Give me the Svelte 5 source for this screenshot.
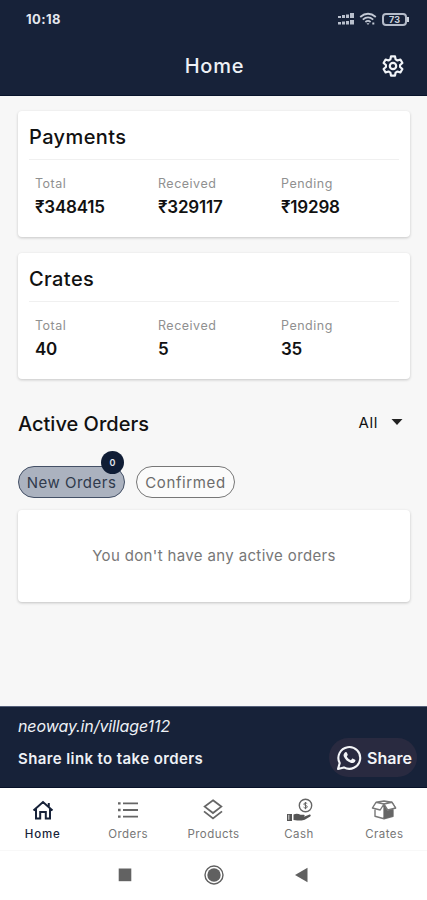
<script>
    let activeTab = 'Home'
    let filter = 'New Orders'

    const cards = [
        {
            title: 'Payments',
            items: [
                { label: 'Total', value: '₹348415' },
                { label: 'Received', value: '₹329117' },
                { label: 'Pending', value: '₹19298' }
            ]
        },
        {
            title: 'Crates',
            items: [
                { label: 'Total', value: '40' },
                { label: 'Received', value: '5' },
                { label: 'Pending', value: '35' }
            ]
        }
    ]

    const tabs = ['Home', 'Orders', 'Products', 'Cash', 'Crates']
</script>

<div class="phone">
    <div class="status">
        <div class="time">10:18</div>
        <div class="status-icons">
            <svg width="18" height="14" viewBox="0 0 18 14" fill="#b9c0cd">
                <path d="M1 4h3v2H1zM5 3h3v3H5zM9 2.400h3V6H9zM13 1h4v5h-4zM1 10h3v2.500H1zM5 9.500h3v3H5zM9 9h3v3.500H9zM13 8h4v4.500h-4z" />
            </svg>
            <svg class="wifi" width="18" height="14" viewBox="0 0 18 14" fill="none" stroke="#c3c9d5" stroke-width="1.800">
                <path d="M1.200 5Q9 -1.500 16.800 5M3.800 7.600Q9 3.200 14.200 7.600M6.400 10Q9 7.800 11.600 10" />
                <path d="M7.500 11.200h3L9 13zM13.300 10.500h2v2h-2z" fill="#c3c9d5" stroke="none" />
            </svg>
            <div class="battery">73</div>
        </div>
    </div>

    <div class="header">
        <div class="header-title">Home</div>
        <svg class="gear" width="24" height="24" viewBox="0 0 24 24" fill="none" stroke="#f1f4f8" stroke-width="2.200" stroke-linejoin="round">
            <path d="M10 2.400h4l.6 3 1.900 1.100 2.900-1 2 3.500-2.300 2v2l2.300 2-2 3.500-2.900-1-1.900 1.100-.6 3h-4l-.6-3-1.900-1.100-2.900 1-2-3.500 2.300-2v-2l-2.300-2 2-3.500 2.900 1 1.900-1.100z" />
            <circle cx="12" cy="12" r="3.200" />
        </svg>
    </div>

    <div class="content">
        {#each cards as card}
            <div class="card">
                <div class="card-title">{card.title}</div>
                <div class="stats">
                    {#each card.items as item}
                        <div class="stat">
                            <div class="label">{item.label}</div>
                            <div class="value">{item.value}</div>
                        </div>
                    {/each}
                </div>
            </div>
        {/each}

        <div class="orders-head">
            <div class="orders-title">Active Orders</div>
            <div class="select">
                <span>All</span>
                <svg width="12" height="6" viewBox="0 0 12 6"><path d="M0.500 0h11L6 6z" fill="#222" /></svg>
            </div>
        </div>

        <div class="chips">
            <button class="chip new" class:selected={filter === 'New Orders'} on:click={() => filter = 'New Orders'}>
                New Orders
                <span class="badge">0</span>
            </button>
            <button class="chip confirmed" class:selected={filter === 'Confirmed'} on:click={() => filter = 'Confirmed'}>Confirmed</button>
        </div>

        <div class="empty">You don't have any active orders</div>
    </div>

    <div class="share-bar">
        <div class="share-text">
            <div class="link">neoway.in/village112</div>
            <div class="hint">Share link to take orders</div>
        </div>
        <button class="share">
            <svg width="26" height="26" viewBox="0 0 26 26">
                <path d="M2 24l1.700-5.900A10.900 10.900 0 1 1 7.900 22.400z" fill="none" stroke="#f4f5f8" stroke-width="2.100" stroke-linejoin="round" />
                <path d="M9.300 7.200c.6-.5 1.300-.2 1.500.3l.9 2.100c.2.500-.1.900-.9 1.800.9 1.800 2.200 3 4.100 3.800l1.200-1.400c.3-.3.600-.3 1-.1l2 1c.5.300.4.700.2 1.300-.6 1.700-2.600 2.400-4.200 1.900-3.500-1-6-3.300-7.300-6.300-.7-1.700.2-3.500 1.500-4.400z" fill="#f4f5f8" />
            </svg>
            <span>Share</span>
        </button>
    </div>

    <div class="tabs">
        {#each tabs as tab}
            <button class="tab" class:active={activeTab === tab} on:click={() => activeTab = tab}>
                {#if tab === 'Home'}
                    <svg width="28" height="24" viewBox="0 0 28 24" fill="none" stroke="#172239" stroke-width="2">
                        <path d="M4.500 12.500L14 4l9.500 8.500M7 10.800V20.500h4.200V14h5.600v6.500H21V10.800M19.800 9V5" />
                    </svg>
                {:else if tab === 'Orders'}
                    <svg width="28" height="24" viewBox="0 0 28 24" fill="#666">
                        <path d="M4 4.200h2.600v2.400H4zM9 4.500h15v1.800H9zM4 10.800h2.600v2.400H4zM9 11.100h15v1.800H9zM4 17.400h2.600v2.400H4zM9 17.700h15v1.800H9z" />
                    </svg>
                {:else if tab === 'Products'}
                    <svg width="28" height="24" viewBox="0 0 28 24" fill="none" stroke="#666" stroke-width="1.800">
                        <path d="M14 2.300l8.300 6.300L14 15 5.700 8.600zM5 13.400l9 7 9-7" />
                    </svg>
                {:else if tab === 'Cash'}
                    <svg width="28" height="24" viewBox="0 0 28 24">
                        <circle cx="20.500" cy="7.500" r="6.200" fill="none" stroke="#666" stroke-width="1.400" />
                        <path d="M22.200 5.600c-.4-.7-3.400-1-3.400.5 0 1.600 3.500.9 3.500 2.700 0 1.600-3 1.500-3.700.4M20.500 4v7.200" fill="none" stroke="#666" />
                        <path d="M2 16h5v7H2z" fill="#555" />
                        <path d="M3.800 16.800v5" stroke="#ddd" />
                        <path d="M8.500 16.500c3-1.400 5-.6 7 .2h3.300c1.200 0 1.200 1.500 0 1.700h-3.500 4.200l4.500-1.700c1.700-.5 2.300.8 1.200 1.700l-5.500 3.300c-2.200 1-5.400.9-11.200.2z" fill="#555" />
                    </svg>
                {:else}
                    <svg width="28" height="24" viewBox="0 0 28 24" fill="none" stroke="#777" stroke-width="1.400" stroke-linejoin="round">
                        <path d="M14 6L6 4.300 2.400 10l7.800 2L14 6l3.800 6 7.800-2L22 4.300zM5 10.900v7.400l9 2.400 9-2.400v-7.400M6 4.300l8-1.300 8 1.300M14 6v14.700" />
                        <path d="M14 6.500l3.500 6 5.500-1.400v7.200l-9 2.400z" fill="#666" stroke="none" />
                        <path d="M14 6l3.800 6 7.800-2L22 4.300z" fill="#fff" />
                    </svg>
                {/if}
                <span>{tab}</span>
            </button>
        {/each}
    </div>

    <div class="system-nav">
        <svg width="20" height="20" viewBox="0 0 20 20"><path d="M3.700 3.500h12.600v12.700H3.700z" fill="#626262" /></svg>
        <svg width="20" height="20" viewBox="0 0 20 20">
            <circle cx="10" cy="10" r="9" fill="none" stroke="#606060" stroke-width="1.400" />
            <circle cx="10" cy="10" r="6.700" fill="#606060" />
        </svg>
        <svg width="20" height="20" viewBox="0 0 20 20"><path d="M3 10l12.500-7.300v14.600z" fill="#606060" /></svg>
    </div>
</div>

<style>
    :global(body) {
        margin: 0;
        background: #f7f7f7;
    }
    .phone {
        width: 427px;
        height: 900px;
        display: flex;
        flex-direction: column;
        overflow: hidden;
        background-color: #f7f7f7;
        font-family: Inter, "Open Sans", sans-serif;
        color: #111;
    }
    button {
        font-family: inherit;
        padding: 0;
        border: none;
        background: none;
        white-space: nowrap;
    }
    svg {
        display: block;
        flex-shrink: 0;
    }

    .status {
        height: 38px;
        box-sizing: border-box;
        background-color: #172239;
        display: flex;
        justify-content: space-between;
        align-items: center;
        padding: 0 18px 0 26px;
    }
    .time {
        color: #e3e7ee;
        font-size: 13px;
        font-weight: 700;
        letter-spacing: 0.4px;
    }
    .status-icons {
        display: flex;
        align-items: center;
    }
    .wifi {
        margin: 0 5px 0 4px;
    }
    .battery {
        position: relative;
        width: 25px;
        height: 13px;
        box-sizing: border-box;
        margin-right: 2px;
        border: 2px solid #b4bbc9;
        border-radius: 4px;
        color: #cbd1dc;
        font-size: 9px;
        font-weight: 700;
        line-height: 9px;
        text-align: center;
    }
    .battery::after {
        content: '';
        position: absolute;
        right: -4px;
        top: 2px;
        width: 2px;
        height: 5px;
        background-color: #cbd1dc;
    }

    .header {
        height: 58px;
        box-sizing: border-box;
        background-color: #172239;
        border-bottom: 1px solid #08142b;
        display: grid;
        grid-template-columns: 1fr auto 1fr;
        align-items: center;
        padding: 0 22px;
    }
    .header-title {
        grid-column: 2;
        margin-top: -2px;
        padding-left: 2px;
        color: #eef1f6;
        font-size: 20px;
        font-weight: 500;
        letter-spacing: 0.8px;
    }
    .gear {
        justify-self: end;
        margin-top: -2px;
    }

    .content {
        flex: 1;
        padding: 15px 17px 0 18px;
    }
    .card {
        height: 126px;
        box-sizing: border-box;
        margin-bottom: 16px;
        padding: 0 11px;
        background-color: #fff;
        border-radius: 4px;
        box-shadow: 0 1px 3px rgba(0, 0, 0, 0.2);
    }
    .card-title {
        height: 48px;
        line-height: 52px;
        border-bottom: 1px solid #f0f0f0;
        font-size: 20px;
        font-weight: 500;
        letter-spacing: 0.4px;
    }
    .stats {
        display: flex;
        padding: 15px 0 0 6px;
    }
    .stat {
        width: 123px;
        flex-shrink: 0;
    }
    .label {
        line-height: 17px;
        font-size: 12.5px;
        color: #909090;
        letter-spacing: 0.5px;
    }
    .value {
        line-height: 31px;
        font-size: 17px;
        font-weight: 600;
        letter-spacing: -0.2px;
    }

    .orders-head {
        display: flex;
        justify-content: space-between;
        align-items: center;
        height: 28px;
        margin-top: 31px;
        padding-right: 7px;
    }
    .orders-title {
        font-size: 20px;
        font-weight: 500;
    }
    .select {
        display: flex;
        align-items: center;
        gap: 13px;
        margin-top: -4px;
        font-size: 15px;
        letter-spacing: 0.6px;
    }

    .chips {
        display: flex;
        gap: 11px;
        margin-top: 28px;
    }
    .chip {
        position: relative;
        height: 32px;
        box-sizing: border-box;
        border: 1px solid #777;
        border-radius: 16px;
        color: #6c6c6c;
        font-size: 15px;
        letter-spacing: 0.5px;
    }
    .new {
        width: 107px;
    }
    .confirmed {
        width: 99px;
        background-color: #fbfbfb;
        letter-spacing: 0.6px;
    }
    .selected {
        background-color: #abb2bf;
        border-color: #445066;
        color: #303a4c;
    }
    .badge {
        position: absolute;
        top: -16px;
        right: 0;
        width: 23px;
        height: 23px;
        border-radius: 50%;
        background-color: #101d35;
        color: #e2e6ed;
        font-size: 9px;
        font-weight: 600;
        line-height: 23px;
        letter-spacing: 0;
    }
    .empty {
        height: 92px;
        line-height: 92px;
        margin-top: 12px;
        background-color: #fff;
        border-radius: 4px;
        box-shadow: 0 1px 3px rgba(0, 0, 0, 0.22);
        text-align: center;
        font-size: 15px;
        letter-spacing: 0.36px;
        color: #777;
    }

    .share-bar {
        height: 82px;
        box-sizing: border-box;
        display: flex;
        justify-content: space-between;
        padding: 7px 10px 0 18px;
        background-color: #172239;
        border-top: 1px solid #55607a;
        border-bottom: 1px solid #071128;
        color: #eef1f6;
    }
    .link {
        line-height: 24px;
        font-size: 16px;
        font-style: italic;
        letter-spacing: -0.1px;
    }
    .hint {
        margin-top: 9px;
        line-height: 24px;
        font-size: 15px;
        font-weight: 600;
        letter-spacing: 0.4px;
    }
    .share {
        display: flex;
        align-items: center;
        gap: 5px;
        width: 88px;
        height: 39px;
        margin-top: 24px;
        box-sizing: border-box;
        padding-left: 7px;
        border-radius: 20px;
        background-color: #292a40;
        color: #f4f5f8;
        font-size: 16px;
        font-weight: 600;
    }

    .tabs {
        display: grid;
        grid-template-columns: repeat(5, 1fr);
        height: 63px;
        box-sizing: border-box;
        background-color: #fff;
        border-bottom: 1px solid #f8f8f8;
    }
    .tab {
        display: flex;
        flex-direction: column;
        align-items: center;
        padding: 10px 0 0 0;
        color: #777;
        font-size: 11.5px;
        line-height: 24px;
        letter-spacing: 0.45px;
    }
    .active {
        color: #172239;
        font-weight: 500;
        letter-spacing: 0.8px;
    }
    .system-nav {
        display: flex;
        justify-content: space-between;
        height: 49px;
        box-sizing: border-box;
        padding: 14px 115px 0 115px;
        background-color: #fff;
    }
</style>
